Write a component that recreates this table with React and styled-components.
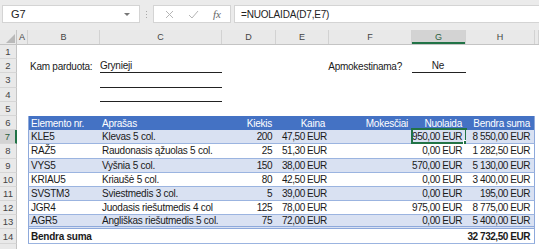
import React from "react";
import styled, { createGlobalStyle, css } from "styled-components";

const GlobalStyle = createGlobalStyle`
  html, body { margin: 0; padding: 0; background: #ffffff; }
  body { font-family: "Liberation Sans", Arial, sans-serif; overflow: hidden; }
  * { box-sizing: border-box; }
`;

const COLS = "17px 11px 72px 122px 54px 53px 83px 54px 69px 1fr";
const ROW_H = "14.2px";
const FONT = `"Liberation Sans", Arial, sans-serif`;

const Page = styled.div`
  width: 539px;
  height: 249px;
  overflow: hidden;
  background: #fff;
`;

/* ---------- formula bar ---------- */
const FormulaBar = styled.div`
  height: 30px;
  background: #ebebeb;
  display: flex;
  align-items: center;
  padding: 5px 0 7px 2px;
`;
const NameBox = styled.div`
  width: 138px;
  height: 18px;
  background: #fff;
  border: 1px solid #d4d4d4;
  display: flex;
  align-items: center;
  justify-content: space-between;
  padding: 0 9px 0 8px;
  font: 11px ${FONT};
  color: #222;
`;
const Caret = styled.span`
  width: 0;
  height: 0;
  border-left: 3px solid transparent;
  border-right: 3px solid transparent;
  border-top: 3px solid #777;
`;
const Grip = styled.div`
  width: 13px;
  display: flex;
  flex-direction: column;
  align-items: center;
  gap: 2px;
  span { width: 1px; height: 1px; background: #a8a8a8; display: block; }
`;
const FxBox = styled.div`
  width: 78px;
  height: 18px;
  background: #fff;
  border: 1px solid #d4d4d4;
  display: flex;
  align-items: center;
  justify-content: space-around;
  padding: 0 2px 0 4px;
  margin-right: 3px;
`;
const FxText = styled.span`
  font: italic 11px "Liberation Serif", "Times New Roman", serif;
  color: #666;
`;
const FormulaInput = styled.div`
  flex: 1;
  height: 18px;
  background: #fff;
  border: 1px solid #d4d4d4;
  border-right: none;
  display: flex;
  align-items: center;
  padding-left: 6px;
  font: 10px ${FONT};
  letter-spacing: -0.2px;
  color: #222;
`;

/* ---------- sheet ---------- */
const Sheet = styled.div`
  display: flex;
  flex-direction: column;
`;
const HeaderRow = styled.div`
  display: grid;
  grid-template-columns: ${COLS};
  height: 15px;
  background: #e9e9e9;
  border-bottom: 1px solid #c4c4c4;
`;
const Corner = styled.div`
  position: relative;
  border-right: 1px solid #c4c4c4;
  svg { position: absolute; right: 1px; bottom: 1px; }
`;
const ColHead = styled.div`
  display: flex;
  align-items: center;
  justify-content: center;
  font: 9px ${FONT};
  color: #444;
  border-right: 1px solid #d2d2d2;
  ${(p) =>
    p.$active &&
    css`
      background: #d3d3d3;
      box-shadow: inset 0 -2px 0 #217346;
      color: #2a5f3f;
    `}
`;
const Row = styled.div`
  display: grid;
  grid-template-columns: ${COLS};
  height: ${ROW_H};
`;
const RowHead = styled.div`
  background: #e9e9e9;
  border-right: 1px solid #c4c4c4;
  border-bottom: 1px solid #d6d6d6;
  display: flex;
  align-items: center;
  justify-content: center;
  font: 9.5px ${FONT};
  color: #444;
  ${(p) =>
    p.$active &&
    css`
      background: #d3d3d3;
      border-right: 2px solid #217346;
      color: #2a5f3f;
    `}
`;
const Cell = styled.div`
  position: relative;
  display: flex;
  align-items: center;
  justify-content: ${(p) =>
    p.$align === "right" ? "flex-end" : p.$align === "center" ? "center" : "flex-start"};
  padding: 0 ${(p) => (p.$pr != null ? p.$pr : 4)}px 0 ${(p) => (p.$pl != null ? p.$pl : 2)}px;
  font: ${(p) => (p.$bold ? "bold " : "")}10px ${FONT};
  letter-spacing: ${(p) => (p.$tight ? "-0.45px" : "-0.25px")};
  color: #1a1a1a;
  white-space: nowrap;
  ${(p) => p.$line && css`border-bottom: 1px solid #222;`}
`;
const TableCell = styled(Cell)`
  background: ${(p) => (p.$head ? "#4472c4" : p.$band ? "#d9e1f2" : "#ffffff")};
  color: ${(p) => (p.$head ? "#ffffff" : "#1a1a1a")};
  border-bottom: ${(p) =>
    p.$head ? "none" : p.$double ? "3px double #8ea9db" : "1px solid #9bb4e0"};
  ${(p) => p.$first && css`border-left: 1px solid #8ea9db;`}
  ${(p) => p.$last && css`border-right: 1px solid #8ea9db;`}
`;
const Selection = styled.div`
  position: absolute;
  left: -1px;
  top: -2px;
  right: -1px;
  bottom: -1px;
  border: 2px solid #217346;
  pointer-events: none;
`;
const FillHandle = styled.div`
  position: absolute;
  right: -3px;
  bottom: -3px;
  width: 5px;
  height: 5px;
  background: #217346;
  border: 1px solid #fff;
`;
const Blank = styled.div``;

const letters = ["A", "B", "C", "D", "E", "F", "G", "H", ""];

const data = [
  ["KLE5", "Klevas 5 col.", "200", "47,50 EUR", "", "950,00 EUR", "8 550,00 EUR"],
  ["RAŽ5", "Raudonasis ąžuolas 5 col.", "25", "51,30 EUR", "", "0,00 EUR", "1 282,50 EUR"],
  ["VYS5", "Vyšnia 5 col.", "150", "38,00 EUR", "", "570,00 EUR", "5 130,00 EUR"],
  ["KRIAU5", "Kriaušė 5 col.", "80", "42,50 EUR", "", "0,00 EUR", "3 400,00 EUR"],
  ["SVSTM3", "Sviestmedis 3 col.", "5", "39,00 EUR", "", "0,00 EUR", "195,00 EUR"],
  ["JGR4", "Juodasis riešutmedis 4 col", "125", "78,00 EUR", "", "975,00 EUR", "8 775,00 EUR"],
  ["AGR5", "Angliškas riešutmedis 5 col.", "75", "72,00 EUR", "", "0,00 EUR", "5 400,00 EUR"],
];

const headers = ["Elemento nr.", "Aprašas", "Kiekis", "Kaina", "Mokesčiai", "Nuolaida", "Bendra suma"];
const aligns = ["left", "left", "right", "left", "right", "right", "right"];
const headAligns = ["left", "left", "right", "right", "right", "right", "right"];

function SheetRow({ n, active, children }) {
  return (
    <Row>
      <RowHead $active={active}>{n}</RowHead>
      {children}
    </Row>
  );
}

export default function App() {
  return (
    <Page>
      <GlobalStyle />
      <FormulaBar>
        <NameBox>
          <span>G7</span>
          <Caret />
        </NameBox>
        <Grip>
          <span />
          <span />
          <span />
        </Grip>
        <FxBox>
          <svg width="9" height="9" viewBox="0 0 9 9">
            <path d="M1 1L8 8M8 1L1 8" stroke="#b5b5b5" strokeWidth="1" />
          </svg>
          <svg width="11" height="9" viewBox="0 0 11 9">
            <path d="M1 5L4 8L10 1" stroke="#b5b5b5" strokeWidth="1" fill="none" />
          </svg>
          <FxText>fx</FxText>
        </FxBox>
        <FormulaInput>=NUOLAIDA(D7,E7)</FormulaInput>
      </FormulaBar>

      <Sheet>
        <HeaderRow>
          <Corner>
            <svg width="9" height="9" viewBox="0 0 9 9">
              <path d="M9 0L9 9L0 9Z" fill="#b9b9b9" />
            </svg>
          </Corner>
          {letters.map((l, i) => (
            <ColHead key={i} $active={l === "G"}>
              {l}
            </ColHead>
          ))}
        </HeaderRow>

        <SheetRow n={1} />
        <SheetRow n={2}>
          <Blank />
          <Cell>Kam parduota:</Cell>
          <Cell $line $pl={0}>Grynieji</Cell>
          <Blank />
          <Blank />
          <Cell $align="right" $pr={10}>Apmokestinama?</Cell>
          <Cell $align="center" $line>Ne</Cell>
        </SheetRow>
        <SheetRow n={3}>
          <Blank />
          <Blank />
          <Cell $line />
        </SheetRow>
        <SheetRow n={4}>
          <Blank />
          <Blank />
          <Cell $line />
        </SheetRow>
        <SheetRow n={5} />
        <SheetRow n={6}>
          <Blank />
          {headers.map((h, i) => (
            <TableCell key={i} $head $align={headAligns[i]} $first={i === 0} $last={i === 6}>
              {h}
            </TableCell>
          ))}
        </SheetRow>
        {data.map((r, ri) => (
          <SheetRow key={ri} n={ri + 7} active={ri === 0}>
            <Blank />
            {r.map((v, ci) => (
              <TableCell
                key={ci}
                $band={ri % 2 === 0}
                $align={aligns[ci]}
                $pl={ci === 3 ? 6 : 2}
                $tight={ci >= 2}
                $first={ci === 0}
                $last={ci === 6}
                $double={ri === 6}
              >
                {v}
                {ri === 0 && ci === 5 && (
                  <Selection>
                    <FillHandle />
                  </Selection>
                )}
              </TableCell>
            ))}
          </SheetRow>
        ))}
        <SheetRow n={14}>
          <Blank />
          <TableCell $bold $first>Bendra suma</TableCell>
          <TableCell />
          <TableCell />
          <TableCell />
          <TableCell />
          <TableCell />
          <TableCell $bold $tight $align="right" $last>32 732,50 EUR</TableCell>
        </SheetRow>
        <SheetRow n="" />
      </Sheet>
    </Page>
  );
}
